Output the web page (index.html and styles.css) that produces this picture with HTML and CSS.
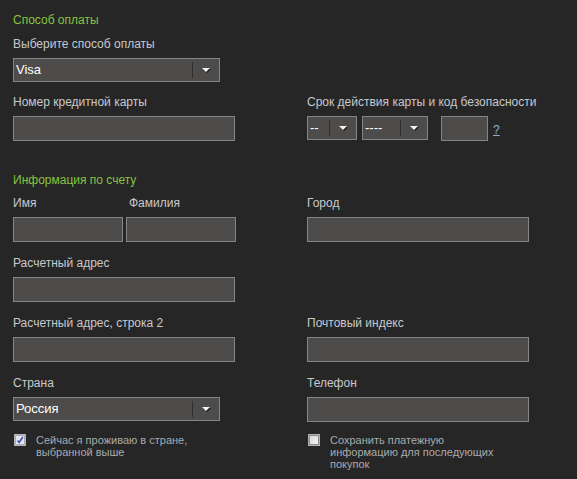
FILE: index.html
```html
<html>
	<head>
		<title>Способ оплаты</title>
		<meta charset="utf-8" />
		<link rel="stylesheet" href="styles.css">
	</head>
	<body>
		<div class="form">
			<h2 class="header">Способ оплаты</h2>
			<div class="field">
				<label class="lbl">Выберите способ оплаты</label>
				<div class="sel wide"><span class="val">Visa</span><span class="arr"></span></div>
			</div>
			<div class="row top">
				<div class="field">
					<label class="lbl">Номер кредитной карты</label>
					<input class="txt" type="text">
				</div>
				<div class="field">
					<label class="lbl">Срок действия карты и код безопасности</label>
					<div class="exp">
						<div class="sel month"><span class="val">--</span><span class="arr"></span></div>
						<div class="sel year"><span class="val">----</span><span class="arr"></span></div>
						<input class="txt cvv" type="text">
						<a href="#" class="help">?</a>
					</div>
				</div>
			</div>

			<h2 class="header second">Информация по счету</h2>
			<div class="row first">
				<div class="pair">
					<div class="field">
						<label class="lbl">Имя</label>
						<input class="txt half" type="text">
					</div>
					<div class="field">
						<label class="lbl shift">Фамилия</label>
						<input class="txt half" type="text">
					</div>
				</div>
				<div class="field">
					<label class="lbl">Город</label>
					<input class="txt" type="text">
				</div>
			</div>
			<div class="row">
				<div class="field">
					<label class="lbl">Расчетный адрес</label>
					<input class="txt" type="text">
				</div>
			</div>
			<div class="row">
				<div class="field">
					<label class="lbl">Расчетный адрес, строка 2</label>
					<input class="txt" type="text">
				</div>
				<div class="field">
					<label class="lbl">Почтовый индекс</label>
					<input class="txt" type="text">
				</div>
			</div>
			<div class="row">
				<div class="field">
					<label class="lbl">Страна</label>
					<div class="sel wide"><span class="val">Россия</span><span class="arr"></span></div>
				</div>
				<div class="field">
					<label class="lbl">Телефон</label>
					<input class="txt" type="text">
				</div>
			</div>
			<div class="row checks">
				<div class="check">
					<span class="box on"><svg width="8" height="8" viewBox="0 0 8 8"><path d="M1.5 4.5 L3.2 6.5 L6.8 1" fill="none" stroke="#3d4fb8" stroke-width="1.6"/></svg></span>
					<span class="ctext">Сейчас я проживаю в стране,<br>выбранной выше</span>
				</div>
				<div class="check">
					<span class="box"></span>
					<span class="ctext">Сохранить платежную<br>информацию для последующих<br>покупок</span>
				</div>
			</div>
		</div>
	</body>
</html>
```

FILE: styles.css
```css
body {
	margin: 0;
	background: #262626;
	font-family: Arial, "Liberation Sans", sans-serif;
	font-size: 12px;
	color: #c6c9cd;
}
.form {
	padding: 13px 13px 0 13px;
}
.header {
	margin: 0 0 10px 0;
	font-size: 12px;
	font-weight: normal;
	line-height: 14px;
	color: #86c440;
}
.header.second {
	margin-top: 32px;
	margin-bottom: 9px;
}
.row {
	display: grid;
	grid-template-columns: 222px 222px;
	column-gap: 72px;
	margin-top: 14px;
}
.row.top {
	margin-top: 13px;
}
.row.first {
	margin-top: 0;
}
.field {
	display: flex;
	flex-direction: column;
}
.lbl {
	display: block;
	line-height: 14px;
	height: 14px;
	margin-bottom: 7px;
	white-space: nowrap;
}
.lbl.shift {
	padding-left: 3px;
}
.txt {
	box-sizing: border-box;
	width: 222px;
	height: 25px;
	margin: 0;
	padding: 0 3px;
	background: #4d4c4a;
	border: 1px solid #858585;
	outline: 0;
	color: #fff;
	font-family: inherit;
	font-size: 12px;
}
.txt.half {
	width: 110px;
}
.pair {
	display: flex;
	gap: 3px;
}
.sel {
	box-sizing: border-box;
	display: flex;
	align-items: center;
	height: 24px;
	background: #4d4c4a;
	border: 1px solid #858585;
	color: #fff;
}
.sel.wide {
	width: 207px;
}
.sel.month {
	width: 50px;
}
.sel.year {
	width: 66px;
	margin-left: 5px;
}
.val {
	flex: 1;
	padding-left: 2px;
	font-size: 13px;
	line-height: 22px;
}
.arr {
	position: relative;
	width: 26px;
	height: 16px;
	border-left: 1px solid #2f2f2f;
}
.arr::after {
	content: "";
	position: absolute;
	left: 9px;
	top: 6px;
	border-left: 4px solid transparent;
	border-right: 4px solid transparent;
	border-top: 4px solid #f2f2f2;
	filter: drop-shadow(1px 1px 0 #1a1a1a);
}
.exp {
	display: flex;
	align-items: flex-start;
}
.txt.cvv {
	width: 47px;
	margin-left: 13px;
}
.help {
	margin-left: 5px;
	margin-top: 7px;
	color: #8fb0d0;
	font-size: 12px;
}
.row.checks {
	margin-top: 12px;
}
.check {
	display: flex;
	align-items: flex-start;
}
.box {
	box-sizing: border-box;
	display: flex;
	align-items: center;
	justify-content: center;
	width: 12px;
	height: 12px;
	margin: 0 10px 0 1px;
	border: 1px solid #b4b4b4;
	background: linear-gradient(135deg, #d8d8d8, #f6f6f6);
	box-shadow: inset 0 0 0 1px #8c8c8c;
}
.box.on {
	background: #e4e6ee;
	box-shadow: inset 0 0 0 1px #a8aab8;
}
.ctext {
	font-size: 11px;
	line-height: 12px;
	margin-top: 0;
	color: #a9abad;
}
```
